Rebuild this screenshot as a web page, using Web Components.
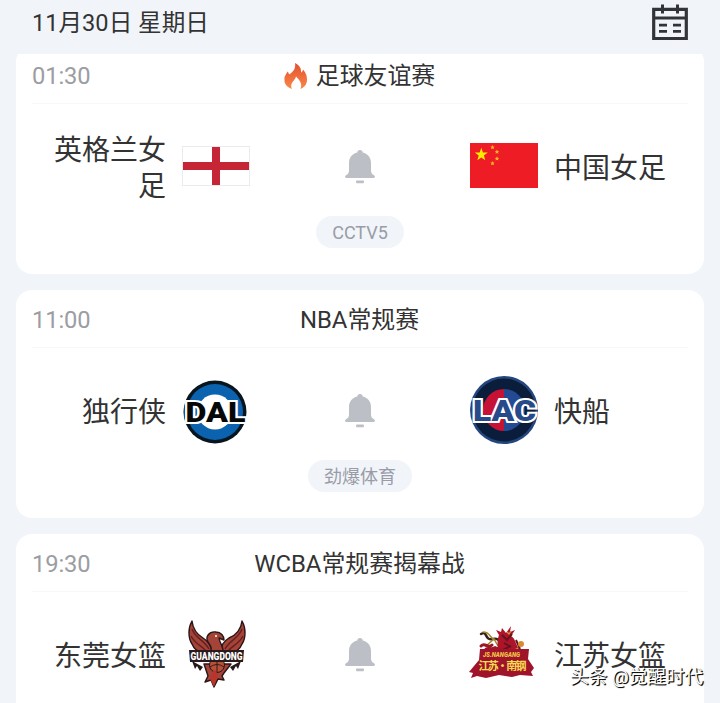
<!DOCTYPE html>
<html lang="zh-CN">
<head>
<meta charset="utf-8">
<title>赛程</title>
<style>
  html, body {
    margin: 0;
    height: 703px;
    overflow: hidden;
    background: #f1f5f9;
    font-family: Roboto, "Noto Sans CJK SC", sans-serif;
    color: #333;
  }
</style>
</head>
<body>
<schedule-page>
  <schedule-header slot="header">11月30日 星期日</schedule-header>
  <match-card time="01:30" channel="CCTV5" hot>
    <span slot="title">足球友谊赛</span>
    <span slot="home">英格兰女足</span>
    <team-logo slot="home-logo" name="england"></team-logo>
    <team-logo slot="away-logo" name="china"></team-logo>
    <span slot="away">中国女足</span>
  </match-card>
  <match-card time="11:00" channel="劲爆体育">
    <span slot="title">NBA常规赛</span>
    <span slot="home">独行侠</span>
    <team-logo slot="home-logo" name="dal"></team-logo>
    <team-logo slot="away-logo" name="lac"></team-logo>
    <span slot="away">快船</span>
  </match-card>
  <match-card time="19:30">
    <span slot="title">WCBA常规赛揭幕战</span>
    <span slot="home">东莞女篮</span>
    <team-logo slot="home-logo" name="guangdong"></team-logo>
    <team-logo slot="away-logo" name="jiangsu"></team-logo>
    <span slot="away">江苏女篮</span>
  </match-card>
  <water-mark slot="mark">头条 @觉醒时代</water-mark>
</schedule-page>

<script>
const LOGOS = {
  england: `
    <rect x=".5" y="14.5" width="67" height="39" fill="#fff" stroke="#ebebed"/>
    <path d="M30 15h8v38h-8zM1 30h66v8H1z" fill="#c62535"/>`,
  china: `
    <rect y="11" width="68" height="45" fill="#ee1c25"/>
    <path d="M11.300 15.800l1.600 4.600 4.900.1-3.900 3 1.400 4.700-4-2.800-4 2.800 1.400-4.700-3.900-3 4.900-.1z" fill="#ffed00"/>
    <g fill="#ffb524">
      <path d="M22.500 13l.7 1.400 1.500.2-1.100 1 .3 1.600-1.400-.8-1.400.8.3-1.600-1.100-1 1.500-.2z"/>
      <path d="M27 17.500l.7 1.400 1.500.2-1.100 1 .3 1.600-1.400-.8-1.400.8.3-1.600-1.100-1 1.500-.2z"/>
      <path d="M27 24.300l.7 1.400 1.500.2-1.100 1 .3 1.600-1.400-.8-1.400.8.3-1.600-1.100-1 1.500-.2z"/>
      <path d="M22.500 29l.7 1.400 1.500.2-1.100 1 .3 1.600-1.400-.8-1.400.8.3-1.600-1.100-1 1.500-.2z"/>
    </g>`,
  dal: `
    <circle cx="33" cy="36" r="31.500" fill="#07151f"/>
    <circle cx="33" cy="36" r="28" fill="#0b63b0"/>
    <circle cx="33" cy="36" r="17.500" fill="#fff"/>
    <text x="3.500" y="45.500" font-family="Roboto" font-weight="900" font-size="27" textLength="60" lengthAdjust="spacingAndGlyphs" fill="#050708" stroke="#fff" stroke-width="4" paint-order="stroke">DAL</text>`,
  lac: `
    <circle cx="34" cy="34" r="34" fill="#24467f"/>
    <circle cx="34" cy="34" r="31.500" fill="#0a1d3a"/>
    <path d="M34 13a21 21 0 0 0 0 42z" fill="#c51235"/>
    <path d="M34 13a21 21 0 0 1 0 42z" fill="#244a94"/>
    <text x="3" y="44.500" font-family="Roboto" font-weight="900" font-size="29" textLength="63" lengthAdjust="spacingAndGlyphs" fill="#274a8a" stroke="#fff" stroke-width="4" paint-order="stroke">LAC</text>`,
  guangdong: `
    <g transform="translate(0 1)">
      <g stroke="#2b1516" stroke-width="1.400" stroke-linejoin="round" fill="#a44338">
        <path d="M10 0C6 7 6 17 10 23c2 5 6 8 11 9l9-1c-1-7-4-11-9-14C16 14 11 9 10 0z"/>
        <path d="M60 0c4 7 4 17 0 23-2 5-6 8-11 9l-11-1c1-7 4-11 9-14C54 14 59 9 60 0z"/>
        <path d="M28 32c3-5 0-8-2-11-3-5 1-11 8-10 5 0 8 4 8 8l-5-2c1 6 5 9 4 15z"/>
        <path d="M22 43h27l-7 9-2 3 2 4-6-1-4 8-3-7-6 2 3-6z"/>
      </g>
      <path d="M10 8c3 9 12 11 17 20M9 15c4 8 10 9 15 15M60 8c-3 9-12 11-17 20M61 15c-4 8-10 9-15 15" fill="none" stroke="#64201f" stroke-width="1.400"/>
      <path d="M10 40l3 8 2-3 3 5 3-4zM59 40l-3 8-2-3-3 5-3-4z" fill="#26191a"/>
      <circle cx="35" cy="44" r="7.500" fill="#b6523b" stroke="#2b1516"/>
      <path d="M28 46q7-5 14 0M35 37v14" fill="none" stroke="#3d1716"/>
      <path d="M32 48l4 5-4 13-4-8z" fill="#b8342c"/>
      <circle cx="34" cy="15" r="1" fill="#fff"/>
      <path d="M7 29h55l-1 12H8z" fill="#2a1a1b"/>
      <text x="8.500" y="39" font-family="Roboto" font-weight="900" font-size="10.500" textLength="52" lengthAdjust="spacingAndGlyphs" fill="#fff">GUANGDONG</text>
    </g>`,
  jiangsu: `
    <g transform="translate(-2 2)">
      <g fill="none" stroke-linecap="round">
        <path d="M13 12c7-4 3 7 12 5s5 8 10 4" stroke="#35211b" stroke-width="2.500"/>
        <path d="M15 10c8 0 6 6 12 8M18 24l8-7 4 7" stroke="#a4852d" stroke-width="1.500"/>
        <path d="M13 24c4-4 7 3 11-1M18 27h14" stroke="#9c1725" stroke-width="3"/>
      </g>
      <path d="M31 31c-2-8-2-13 0-18l-3-5 5 2 1-4 4 5 5-7-1 6 5-2-4 6c6 4 4 10 10 15l4 5z" fill="#ad1429"/>
      <path d="M34 13l5 5 5-6M36 21l7 4M35 28l8-4M48 18l4 9" stroke="#62151a" stroke-width="2" fill="none"/>
      <path d="M39 10l2 2 2-3M45 29l5-3" stroke="#d6953c" stroke-width="1.200" fill="none"/>
      <circle cx="53" cy="22" r="3" fill="#d98b31"/>
      <path d="M12 27h8l7-3 7 3h27l-1 10 6 9-3 4 2 4-13-1-8 2-13-2-13 3-9-2-6 2 2-5-4-1 5-6 5-6z" fill="#9f142b"/>
      <text x="15" y="34.500" font-family="Roboto" font-style="italic" font-weight="900" font-size="8" textLength="37" lengthAdjust="spacingAndGlyphs" fill="#f0c545">JS.NANGANG</text>
      <text x="10.500" y="48" font-family="Noto Sans CJK SC" font-weight="700" font-size="11" textLength="48" fill="#f7dc4f">江苏·南钢</text>
    </g>`
};

class SchedulePage extends HTMLElement {
  constructor() {
    super();
    this.attachShadow({ mode: 'open' });
    this.shadowRoot.innerHTML = `
      <style>
        :host {
          display: block;
          position: relative;
          height: 703px;
          overflow: hidden;
        }
        /* the list is scrolled a little way under the header */
        main {
          display: flex;
          flex-direction: column;
          gap: 16px;
          margin-top: -8px;
          padding: 0 16px;
        }
      </style>
      <slot name="header"></slot>
      <main><slot></slot></main>
      <slot name="mark"></slot>
    `;
  }
}

class ScheduleHeader extends HTMLElement {
  constructor() {
    super();
    this.attachShadow({ mode: 'open' });
    this.shadowRoot.innerHTML = `
      <style>
        :host {
          display: flex;
          align-items: center;
          justify-content: space-between;
          position: relative;
          z-index: 1;
          box-sizing: border-box;
          height: 54px;
          padding: 0 32px 8px;
          background: #f1f5f9;
          font-size: 23.600px;
          line-height: 36px;
        }
        svg { display: block; }
      </style>
      <span><slot></slot></span>
      <svg width="36" height="46" viewBox="0 0 36 46" fill="none" stroke="#333438">
        <path d="M1.700 9.300h32.600v29.200H1.700zM1.500 18h33" stroke-width="3.200"/>
        <path d="M10.500 4.500v9M25.500 4.500v9" stroke-width="3"/>
        <path d="M7 25.200h8M21 25.200h8M7 31.400h8M21 31.400h8" stroke-width="2.800"/>
      </svg>
    `;
  }
}

class TeamLogo extends HTMLElement {
  connectedCallback() {
    if (!this.shadowRoot) this.attachShadow({ mode: 'open' });
    this.shadowRoot.innerHTML = `
      <style>
        :host { display: block; width: 68px; height: 68px; }
        svg { display: block; overflow: visible; }
      </style>
      <svg width="68" height="68" viewBox="0 0 68 68">${LOGOS[this.getAttribute('name')] || ''}</svg>
    `;
  }
}

class MatchCard extends HTMLElement {
  connectedCallback() {
    if (!this.shadowRoot) this.attachShadow({ mode: 'open' });
    this.render();
  }

  render() {
    const channel = this.getAttribute('channel');

    let flameHTML = '';
    if (this.hasAttribute('hot')) {
      flameHTML = `
        <svg class="flame" width="24" height="28" viewBox="0 0 24 28">
          <defs>
            <linearGradient id="fire" x1="0" y1="0" x2="0" y2="1">
              <stop offset="0" stop-color="#e2502f"/>
              <stop offset="1" stop-color="#f98848"/>
            </linearGradient>
          </defs>
          <path d="M11 1c5 2.500 6.500 6 6 9.500 1.200-.7 1.800-1.600 2-3 3 3.200 4 6.500 4 10 0 4.500-2.200 7.500-6.500 9.500 1.800-4.500.2-8-4.500-12.500-1 4-4.800 5.500-4.800 9.500 0 1.200.3 2.200.8 3C3.500 25.500 0 22 .5 17.500 0 14 2.500 12 3.500 9.500c1 1 1.400 2 1.500 3C9.500 10 12 6 11 1z" fill="url(#fire)"/>
        </svg>`;
    }

    let channelHTML = '';
    if (channel) {
      channelHTML = `<div class="channel">${channel}</div>`;
    }

    this.shadowRoot.innerHTML = `
      <style>
        :host {
          display: block;
          box-sizing: border-box;
          height: 228px;
          flex-shrink: 0;
          padding: 0 16px;
          border-radius: 16px;
          background: #fff;
        }
        .top {
          display: grid;
          grid-template-columns: 1fr auto 1fr;
          align-items: center;
          box-sizing: border-box;
          height: 58px;
          padding-top: 2px;
          border-bottom: 1px solid #f7f8f9;
          line-height: 36px;
        }
        .time { font-size: 23.700px; color: #9b9da2; letter-spacing: -.1px; }
        .title {
          display: flex;
          align-items: center;
          gap: 8px;
          font-size: 23.900px;
          margin-right: 1px;
        }
        .teams {
          display: grid;
          grid-template-columns: 134px 68px 1fr 68px 134px;
          column-gap: 16px;
          align-items: center;
          height: 72px;
          margin-top: 26px;
          font-size: 28px;
          line-height: 36px;
        }
        /* names sit a touch lower than the logos */
        .home, .away { padding-top: 6px; margin: -3px 0; }
        .home { text-align: right; padding-left: 16px; }
        .bell { display: block; justify-self: center; }
        .foot { display: flex; justify-content: center; margin-top: 14px; }
        .channel {
          height: 32px;
          padding: 0 16px;
          border-radius: 16px;
          background: #f1f5f9;
          color: #999ca7;
          font-size: 18px;
          line-height: 33px;
        }
      </style>
      <div class="top">
        <span class="time">${this.getAttribute('time')}</span>
        <div class="title">${flameHTML}<slot name="title"></slot></div>
      </div>
      <div class="teams">
        <div class="home"><slot name="home"></slot></div>
        <slot name="home-logo"></slot>
        <svg class="bell" width="32" height="36" viewBox="0 0 32 36" fill="#bdbfc7">
          <path d="M16 2a2.700 2.700 0 0 1 2.700 2.600C24 5.800 27 9.800 27 15v7.500c0 2.400 1 3.700 3.300 5 1.200.8.700 2.500-.7 2.500H2.400c-1.400 0-1.900-1.700-.7-2.500C4 26.200 5 24.900 5 22.500V15C5 9.800 8 5.800 13.300 4.600A2.700 2.700 0 0 1 16 2z"/>
          <rect x="12" y="32.500" width="8" height="2.800" rx="1"/>
        </svg>
        <slot name="away-logo"></slot>
        <div class="away"><slot name="away"></slot></div>
      </div>
      <div class="foot">${channelHTML}</div>
    `;
  }
}

class WaterMark extends HTMLElement {
  constructor() {
    super();
    this.attachShadow({ mode: 'open' });
    this.shadowRoot.innerHTML = `
      <style>
        :host {
          display: block;
          position: absolute;
          right: 17px;
          bottom: 14px;
          z-index: 2;
          font-size: 18.600px;
          line-height: 24px;
          white-space: nowrap;
          color: #fff;
          text-shadow: 1px 1px 0 #111, 1px 1px 1px #222;
        }
      </style>
      <slot></slot>
    `;
  }
}

customElements.define('schedule-page', SchedulePage);
customElements.define('schedule-header', ScheduleHeader);
customElements.define('team-logo', TeamLogo);
customElements.define('match-card', MatchCard);
customElements.define('water-mark', WaterMark);
</script>
</body>
</html>
